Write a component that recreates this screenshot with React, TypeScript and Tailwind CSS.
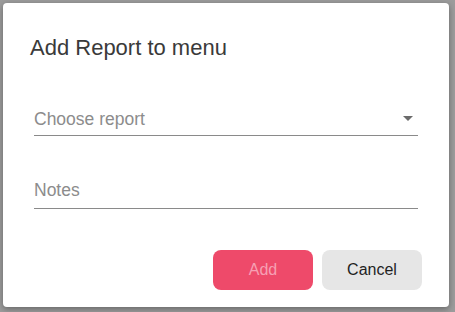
export default function App() {
  return (
    <div className="w-[455px] h-[312px] bg-[#9c9c9c] p-[3px] pr-[6px] pb-[5px]">
      <div className="h-full bg-white rounded-[4px] shadow-[0_2px_6px_rgba(0,0,0,0.35)] flex flex-col px-[27px] pt-[33px]" style={{ fontFamily: "'Liberation Sans', Arial, sans-serif" }}>
        <h2 className="text-[22px] leading-[24px] text-[#3a3a3a]">Add Report to menu</h2>

        <div className="mt-[49px] mx-[4px] flex items-center justify-between border-b border-[#8a8a8a] pb-[6px]">
          <span className="text-[17.5px] leading-[20px] text-[#8c8c8c]">Choose report</span>
          <svg width="12" height="6" viewBox="0 0 12 6" className="mr-[4px]">
            <path d="M1 0h10L6 5z" fill="#6b6b6b" />
          </svg>
        </div>

        <div className="mt-[43px] mx-[4px] border-b border-[#8a8a8a] pb-[5px]">
          <span className="text-[17.5px] leading-[20px] text-[#8c8c8c]">Notes</span>
        </div>

        <div className="mt-auto mb-[17px] flex justify-end gap-[9px]">
          <button className="w-[100px] h-[40px] rounded-[8px] bg-[#ee4a6a] text-[#f6a0b4] text-[16px]">
            Add
          </button>
          <button className="w-[100px] h-[40px] rounded-[8px] bg-[#e6e6e6] text-[#1f1f1f] text-[16px]">
            Cancel
          </button>
        </div>
      </div>
    </div>
  );
}
